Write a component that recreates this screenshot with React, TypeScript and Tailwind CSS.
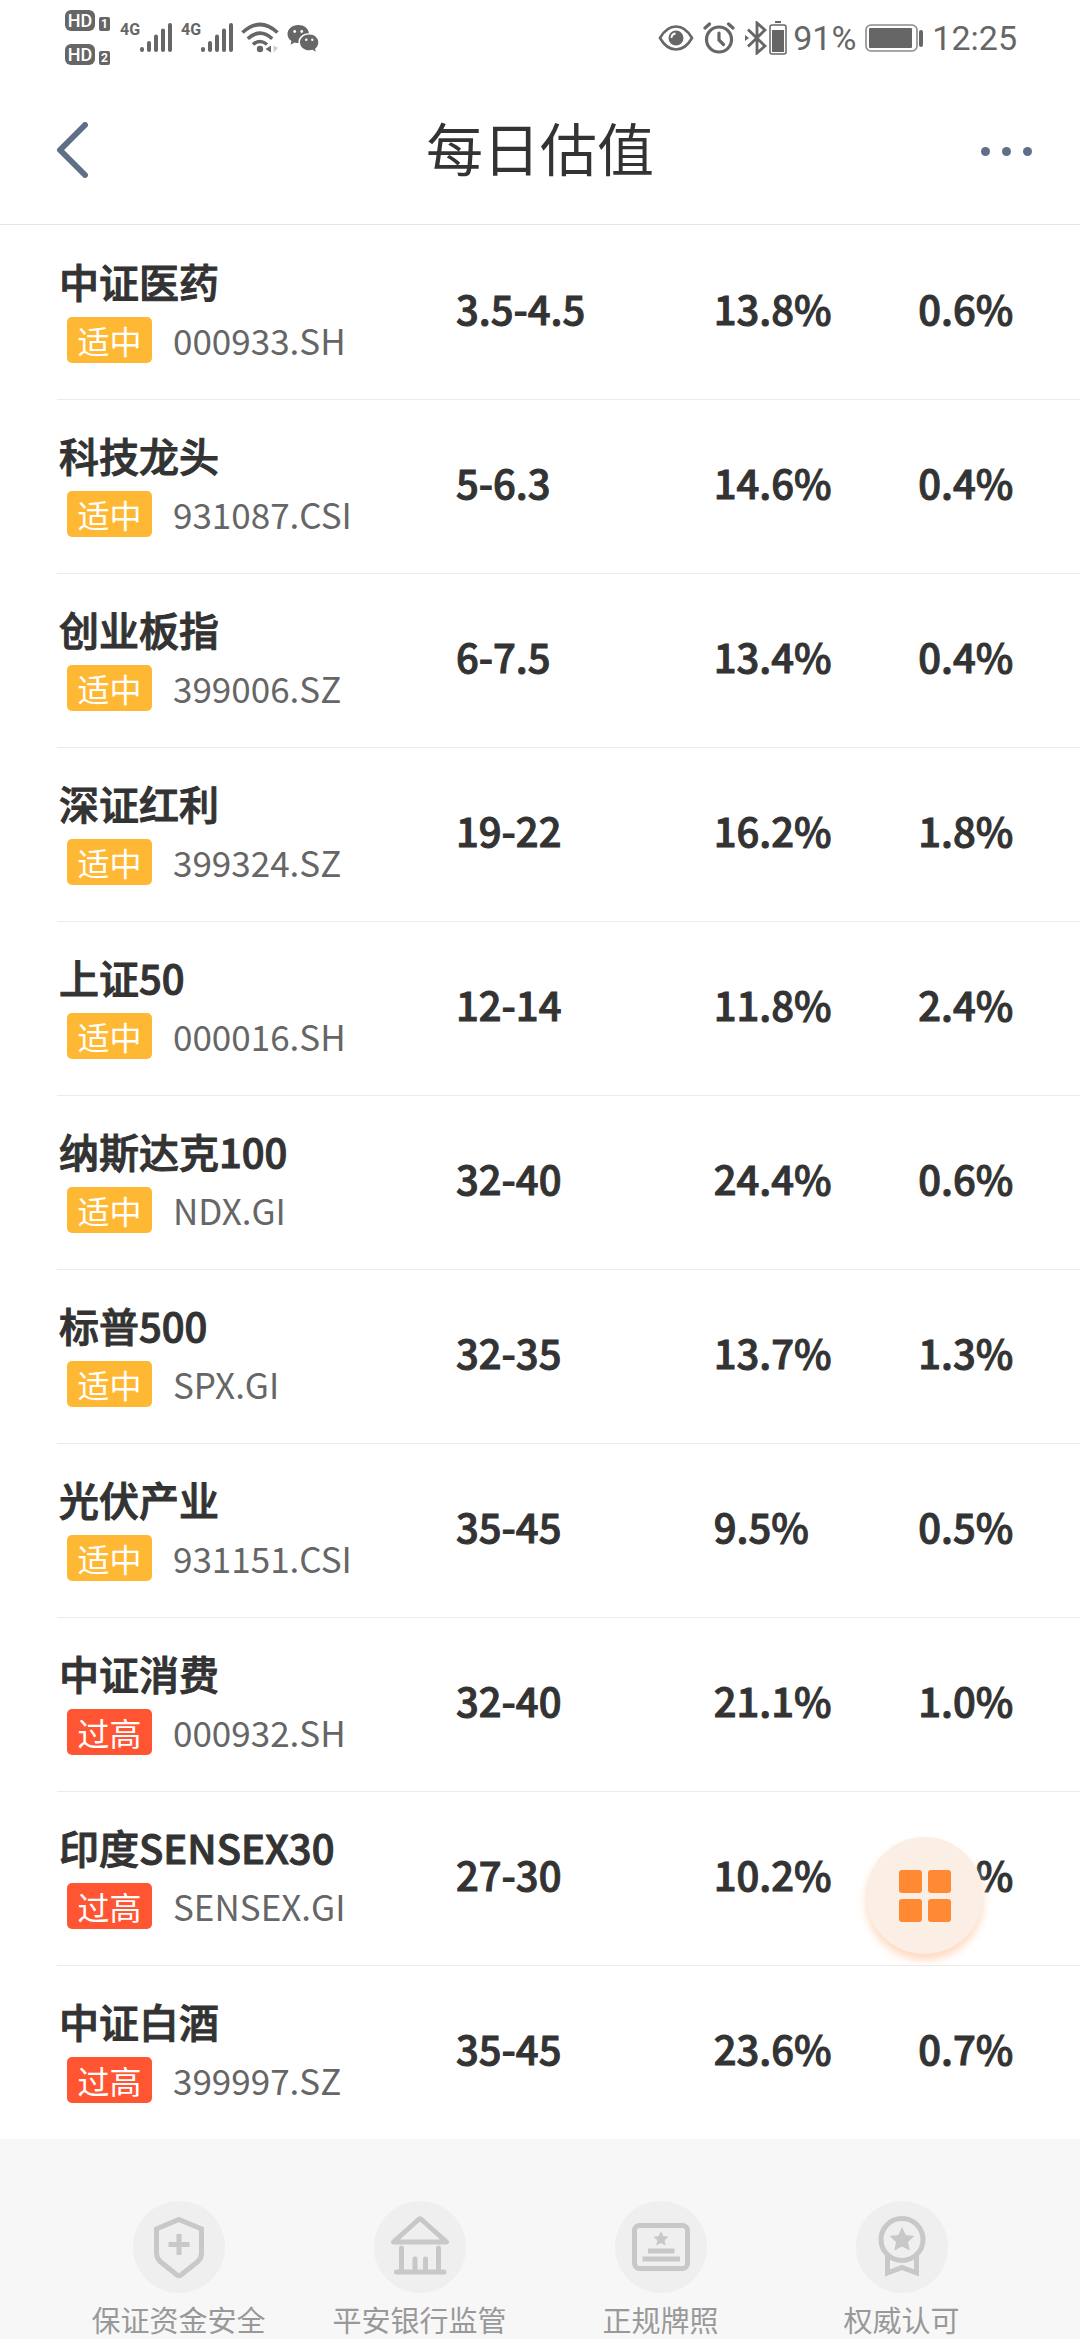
import React from "react";

type Fund = {
  name: string;
  code: string;
  level: string;
  range: string;
  roe: string;
  dividend: string;
};

const funds: Fund[] = [
  { name: "中证医药", code: "000933.SH", level: "适中", range: "3.5-4.5", roe: "13.8%", dividend: "0.6%" },
  { name: "科技龙头", code: "931087.CSI", level: "适中", range: "5-6.3", roe: "14.6%", dividend: "0.4%" },
  { name: "创业板指", code: "399006.SZ", level: "适中", range: "6-7.5", roe: "13.4%", dividend: "0.4%" },
  { name: "深证红利", code: "399324.SZ", level: "适中", range: "19-22", roe: "16.2%", dividend: "1.8%" },
  { name: "上证50", code: "000016.SH", level: "适中", range: "12-14", roe: "11.8%", dividend: "2.4%" },
  { name: "纳斯达克100", code: "NDX.GI", level: "适中", range: "32-40", roe: "24.4%", dividend: "0.6%" },
  { name: "标普500", code: "SPX.GI", level: "适中", range: "32-35", roe: "13.7%", dividend: "1.3%" },
  { name: "光伏产业", code: "931151.CSI", level: "适中", range: "35-45", roe: "9.5%", dividend: "0.5%" },
  { name: "中证消费", code: "000932.SH", level: "过高", range: "32-40", roe: "21.1%", dividend: "1.0%" },
  { name: "印度SENSEX30", code: "SENSEX.GI", level: "过高", range: "27-30", roe: "10.2%", dividend: "1.1%" },
  { name: "中证白酒", code: "399997.SZ", level: "过高", range: "35-45", roe: "23.6%", dividend: "0.7%" },
];

function HdBadge({ sim }: { sim: string }) {
  return (
    <div className="flex items-end gap-1">
      <span className="flex h-[21px] w-[30px] items-center justify-center rounded-[6px] bg-[#666] text-[18px] leading-none font-medium text-white">
        HD
      </span>
      <span className="flex h-[14px] w-[11px] items-center justify-center rounded-[2px] bg-[#666] text-[12px] leading-none font-bold text-white">
        {sim}
      </span>
    </div>
  );
}

function Signal() {
  return (
    <div className="flex h-8 items-start">
      <span className="text-[16px] leading-4 font-bold">4G</span>
      <svg width="33" height="32" viewBox="0 0 33 32" stroke="currentColor" strokeWidth="4" strokeLinecap="round">
        <path d="M2 27v1M9 21v7M16 14.500v13.500M23 8.500v19.500M30 3v25" />
      </svg>
    </div>
  );
}

function StatusBar() {
  return (
    <div className="flex h-[75px] items-center justify-between pr-[63px] pl-[65px] font-[Roboto,sans-serif] text-[#666]">
      <div className="flex items-center">
        <div className="flex flex-col gap-[13px]">
          <HdBadge sim="1" />
          <HdBadge sim="2" />
        </div>
        <div className="ml-[10px] flex gap-2">
          <Signal />
          <Signal />
        </div>
        <svg className="ml-[7px]" width="38" height="32" viewBox="0 0 38 32" fill="none" stroke="currentColor" strokeWidth="3.600">
          <path d="M1.500 10.500Q19-5.500 36.500 10.500M6.800 16.800Q19 5.500 31.200 16.800M12 22.500Q19 16.500 26 22.500" />
          <circle cx="19" cy="27" r="3.200" fill="currentColor" stroke="none" />
          <path d="M30 23.500v7l-5.500-3.500z" fill="currentColor" stroke="none" />
          <path d="M32.500 23.500v7l4.500-4.500z" fill="#ccc" stroke="none" />
        </svg>
        <svg className="ml-2" width="32" height="28" viewBox="0 0 32 28" fill="currentColor">
          <path d="M11.300 1C5 1 .5 5 .5 10c0 3 1.500 5.400 4 7l-1 3.700 4-2.200c1.300.4 2.600.6 4 .5C11 13.500 15.500 9 22 9.200 21.300 4.300 17 1 11.300 1z" />
          <path d="M22.300 10.500c-5.200 0-9.300 3.500-9.300 7.900s4.100 7.900 9.300 7.900c1.100 0 2.200-.2 3.200-.5l3.300 1.900-.8-3c2-1.500 3.300-3.700 3.300-6.300 0-4.400-3.900-7.900-9-7.900z" />
          <g fill="#fff">
            <circle cx="7.700" cy="7.500" r="1.400" />
            <circle cx="14.700" cy="7.500" r="1.400" />
            <circle cx="19.300" cy="15.800" r="1.200" />
            <circle cx="25.300" cy="15.800" r="1.200" />
          </g>
        </svg>
      </div>

      <div className="flex items-center">
        <svg width="36" height="28" viewBox="0 0 36 28" fill="none" stroke="currentColor" strokeWidth="2.600">
          <path d="M2 14Q8.500 2.500 18 2.500T34 14Q27.500 25.500 18 25.500T2 14z" />
          <circle cx="18" cy="14" r="7.500" fill="currentColor" stroke="none" />
          <path d="M13.500 14q0-4 4-4.500" stroke="#fff" strokeWidth="1.800" />
        </svg>
        <svg className="ml-[9px]" width="32" height="32" viewBox="0 0 32 32" fill="none" stroke="currentColor" strokeWidth="3.200" strokeLinecap="round">
          <circle cx="16" cy="17.500" r="12.500" />
          <path d="M16 11v7l4.500 4.500" />
          <path d="M2 6l4.500-4M30 6l-4.500-4" />
        </svg>
        <svg className="ml-[10px]" width="22" height="34" viewBox="0 0 22 34" fill="none" stroke="currentColor" strokeWidth="2.800">
          <path d="M3 8.500l17 16.500-8 7V2l8 7L3 25.500" />
          <path d="M0 14v6l4-3z" fill="currentColor" stroke="none" />
        </svg>
        <svg className="ml-[2px]" width="18" height="34" viewBox="0 0 18 34">
          <rect x="6" y="0" width="6" height="2" fill="currentColor" />
          <rect x="1" y="4" width="16" height="29" rx="2" fill="none" stroke="currentColor" strokeWidth="1.500" />
          <rect x="3" y="9" width="12" height="22" fill="currentColor" />
        </svg>
        <span className="ml-[6px] text-[34px] leading-10">91%</span>
        <svg className="ml-[9px]" width="59" height="28" viewBox="0 0 59 28">
          <rect x="1" y="1" width="51" height="26" rx="5" fill="none" stroke="#8a8a8a" strokeWidth="1.600" />
          <rect x="4" y="4" width="43" height="20" rx="1" fill="currentColor" />
          <rect x="54" y="6" width="4" height="17" rx="2" fill="currentColor" />
        </svg>
        <span className="ml-2 text-[34px] leading-10">12:25</span>
      </div>
    </div>
  );
}

function Header() {
  return (
    <header className="flex h-[150px] items-center justify-between border-b border-[#e4e4e8] px-12">
      <button type="button" aria-label="返回" className="w-16 pl-[7px] text-[#5f6f87]">
        <svg width="34" height="56" viewBox="0 0 34 56" fill="none" stroke="currentColor" strokeWidth="6" strokeLinecap="round" strokeLinejoin="round">
          <path d="M30 3L5 28l25 25" />
        </svg>
      </button>
      <h1 className="pb-2 text-[57px] leading-[72px] text-[#333]">每日估值</h1>
      <button type="button" aria-label="更多" className="flex w-16 justify-end gap-3 pt-1 text-[#5f6f87]">
        <span className="size-[9px] rounded-full bg-current" />
        <span className="size-[9px] rounded-full bg-current" />
        <span className="size-[9px] rounded-full bg-current" />
      </button>
    </header>
  );
}

function FundRow({ fund }: { fund: Fund }) {
  return (
    <tr className="h-[174px] border-b border-[#ebebeb] last:border-b-0">
      <td className="pb-2 pl-[2px]">
        <div className="mb-2 text-[40px] leading-[56px] font-medium [-webkit-text-stroke:1px_#333]">{fund.name}</div>
        <div className="flex items-center gap-[21px] pl-2">
          <span
            className={`flex h-[46px] w-[85px] items-center justify-center rounded-[5px] text-[32px] leading-none text-white ${
              fund.level === "过高" ? "bg-[#ff5533]" : "bg-[#ffb833]"
            }`}
          >
            {fund.level}
          </span>
          <span className="text-[35px] leading-[46px] text-[#666]">{fund.code}</span>
        </div>
      </td>
      <td className="pb-2 text-[40px] font-medium [-webkit-text-stroke:1px_#333]">{fund.range}</td>
      <td className="pb-2 pl-[2px] text-[40px] font-medium [-webkit-text-stroke:1px_#333]">{fund.roe}</td>
      <td className="pb-2 pl-[2px] text-[40px] font-medium [-webkit-text-stroke:1px_#333]">{fund.dividend}</td>
    </tr>
  );
}

const promises = [
  {
    label: "保证资金安全",
    icon: (
      <>
        <path d="M46 18.500L68.500 28v24c0 4-1.500 6.500-4 8.800L48 74q-2 1.500-4 0L27.500 60.800c-2.500-2.300-4-4.800-4-8.800V28z" />
        <path d="M46 33v21M35.500 43.500h21" />
      </>
    ),
  },
  {
    label: "平安银行监管",
    icon: (
      <g strokeLinecap="round" strokeLinejoin="round">
        <path d="M19.500 41L44 19q2-2 4 0l24.500 22z" />
        <path d="M27.500 47v23M64.500 47v23M41 58v12M51.500 58v12M22.500 71h47.500" />
      </g>
    ),
  },
  {
    label: "正规牌照",
    icon: (
      <>
        <rect x="19.500" y="24.500" width="53" height="43" rx="5" />
        <path d="M33 50h26.500M27.500 58h37.500" />
        <path stroke="none" fill="currentColor" d="M46 30l2.300 5 5.200.7-3.800 3.600 1 5.200-4.700-2.500-4.700 2.500 1-5.200-3.800-3.600 5.200-.7z" />
      </>
    ),
  },
  {
    label: "权威认可",
    icon: (
      <>
        <circle cx="46" cy="38.500" r="21" />
        <path d="M31.500 53.500v18.500L46 66.500 60.500 72V53.500" />
        <path stroke="none" fill="currentColor" d="M46 26l3.700 8 8.700 1-6.400 6 1.700 8.600-7.700-4.200-7.700 4.200 1.700-8.600-6.400-6 8.700-1z" />
      </>
    ),
  },
];

export default function App() {
  return (
    <div className="min-h-screen bg-white font-['Noto_Sans_CJK_SC',sans-serif] text-[#333]">
      <StatusBar />
      <Header />

      <main className="pl-[57px]">
        <table className="w-full table-fixed border-collapse text-left">
          <colgroup>
            <col className="w-[39%]" />
            <col className="w-[25%]" />
            <col className="w-[20%]" />
            <col className="w-[16%]" />
          </colgroup>
          <tbody>
            {funds.map((fund) => (
              <FundRow key={fund.code} fund={fund} />
            ))}
          </tbody>
        </table>
      </main>

      <footer className="grid grid-cols-4 bg-[#f7f7f7] px-[58px] pt-[62px]">
        {promises.map((item) => (
          <div key={item.label} className="flex flex-col items-center gap-[6px]">
            <div className="size-[92px] rounded-full bg-[#efefef] text-[#c8c8c8]">
              <svg viewBox="0 0 92 92" fill="none" stroke="currentColor" strokeWidth="5">
                {item.icon}
              </svg>
            </div>
            <span className="text-[29px] leading-10 whitespace-nowrap text-[#999]">{item.label}</span>
          </div>
        ))}
      </footer>

      <button
        type="button"
        aria-label="菜单"
        className="fixed right-[97px] bottom-[386px] flex size-[117px] items-center justify-center rounded-full bg-[#fbeee5] shadow-[0_6px_8px_#ffd9bf]"
      >
        <span className="grid grid-cols-2 gap-[6px]">
          <span className="size-[23px] rounded-[3px] bg-[#ff8a33]" />
          <span className="size-[23px] rounded-[3px] bg-[#ff8a33]" />
          <span className="size-[23px] rounded-[3px] bg-[#ff8a33]" />
          <span className="size-[23px] rounded-[3px] bg-[#ff8a33]" />
        </span>
      </button>
    </div>
  );
}
